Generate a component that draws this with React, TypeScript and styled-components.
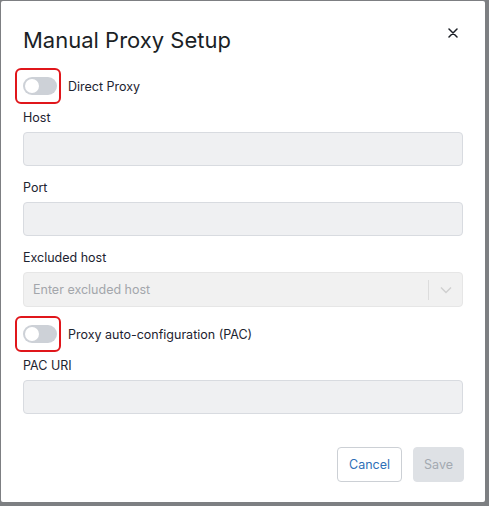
import styled, { createGlobalStyle } from "styled-components";

const GlobalStyle = createGlobalStyle`
  html, body {
    margin: 0;
    padding: 0;
    background: #7d7f82;
    font-family: Inter, "Noto Sans", "Liberation Sans", sans-serif;
  }
  * { box-sizing: border-box; }
`;

const Page = styled.div`
  width: 489px;
  height: 506px;
  padding: 1px 0 0 1px;
  overflow: hidden;
`;

const Modal = styled.div`
  width: 484px;
  height: 501px;
  background: #ffffff;
  border-radius: 2px;
  padding: 0 22px 0 22px;
  display: flex;
  flex-direction: column;
`;

const Header = styled.div`
  height: 67px;
  display: flex;
  align-items: center;
  justify-content: space-between;
  padding-top: 10px;
`;

const Title = styled.h2`
  margin: 0;
  font-size: 22px;
  font-weight: 400;
  color: #1b1f26;
`;

const CloseButton = styled.button`
  border: none;
  background: none;
  padding: 0;
  width: 20px;
  height: 20px;
  display: flex;
  align-items: center;
  justify-content: center;
  margin-top: -13px;
  cursor: pointer;
`;

const ToggleRow = styled.div`
  height: 36px;
  display: flex;
  align-items: center;
  gap: 11px;
  margin-bottom: 6px;
`;

const ToggleWrap = styled.div`
  position: relative;
  display: flex;
  align-items: center;
`;

const Track = styled.div<{ on?: boolean }>`
  width: 34px;
  height: 18px;
  border-radius: 9px;
  background: ${(p) => (p.on ? "#2d6fb7" : "#cdd1d7")};
  padding: 2px;
  display: flex;
`;

const Knob = styled.div`
  width: 14px;
  height: 14px;
  border-radius: 50%;
  background: #ffffff;
`;

const Highlight = styled.div`
  position: absolute;
  left: -8px;
  top: -9px;
  width: 46px;
  height: 36px;
  border: 2.5px solid #e0161b;
  border-radius: 6px;
`;

const ToggleLabel = styled.span`
  font-size: 12.5px;
  color: #1d2330;
`;

const Field = styled.div<{ tight?: boolean }>`
  display: flex;
  flex-direction: column;
  gap: 6px;
  margin-bottom: ${(p) => (p.tight ? "9px" : "14px")};
`;

const Label = styled.label`
  font-size: 12.5px;
  line-height: 16px;
  color: #1d2330;
`;

const Input = styled.div`
  height: 34px;
  width: 100%;
  background: #eff0f2;
  border: 1px solid #d8dbe0;
  border-radius: 4px;
`;

const Select = styled.div`
  height: 35px;
  width: 100%;
  background: #f1f1f1;
  border: 1px solid #e6e6e6;
  border-radius: 4px;
  display: flex;
  align-items: center;
  padding-left: 9px;
`;

const Placeholder = styled.span`
  flex: 1;
  font-size: 12.5px;
  color: #a3a6ab;
`;

const Separator = styled.div`
  width: 1px;
  height: 20px;
  background: #dcdcdc;
`;

const Chevron = styled.div`
  width: 33px;
  display: flex;
  align-items: center;
  justify-content: center;
`;

const Footer = styled.div`
  display: flex;
  justify-content: flex-end;
  gap: 11px;
  margin-top: 19px;
  margin-right: -1px;
`;

const Button = styled.button<{ primary?: boolean }>`
  height: 35px;
  padding: 0 ${(p) => (p.primary ? "10px" : "11px")};
  border-radius: 4px;
  font-family: inherit;
  font-size: 12.5px;
  border: 1px solid ${(p) => (p.primary ? "#dee1e5" : "#ccd0d5")};
  background: ${(p) => (p.primary ? "#dee1e5" : "#ffffff")};
  color: ${(p) => (p.primary ? "#a3a9b1" : "#2d6fb7")};
`;

function Toggle({ label }: { label: string }) {
  return (
    <ToggleRow>
      <ToggleWrap>
        <Track>
          <Knob />
        </Track>
        <Highlight />
      </ToggleWrap>
      <ToggleLabel>{label}</ToggleLabel>
    </ToggleRow>
  );
}

function App() {
  return (
    <Page>
      <GlobalStyle />
      <Modal>
        <Header>
          <Title>Manual Proxy Setup</Title>
          <CloseButton aria-label="Close">
            <svg width="10" height="10" viewBox="0 0 10 10">
              <path
                d="M1 1L9 9M9 1L1 9"
                stroke="#1b1f26"
                strokeWidth="1.5"
                strokeLinecap="round"
              />
            </svg>
          </CloseButton>
        </Header>
        <Toggle label="Direct Proxy" />
        <Field>
          <Label>Host</Label>
          <Input />
        </Field>
        <Field>
          <Label>Port</Label>
          <Input />
        </Field>
        <Field tight>
          <Label>Excluded host</Label>
          <Select>
            <Placeholder>Enter excluded host</Placeholder>
            <Separator />
            <Chevron>
              <svg width="12" height="8" viewBox="0 0 12 8">
                <path
                  d="M1 1.5L6 6.5L11 1.5"
                  stroke="#cfcfcf"
                  strokeWidth="1.4"
                  fill="none"
                />
              </svg>
            </Chevron>
          </Select>
        </Field>
        <Toggle label="Proxy auto-configuration (PAC)" />
        <Field>
          <Label>PAC URI</Label>
          <Input />
        </Field>
        <Footer>
          <Button>Cancel</Button>
          <Button primary>Save</Button>
        </Footer>
      </Modal>
    </Page>
  );
}

export default App;
